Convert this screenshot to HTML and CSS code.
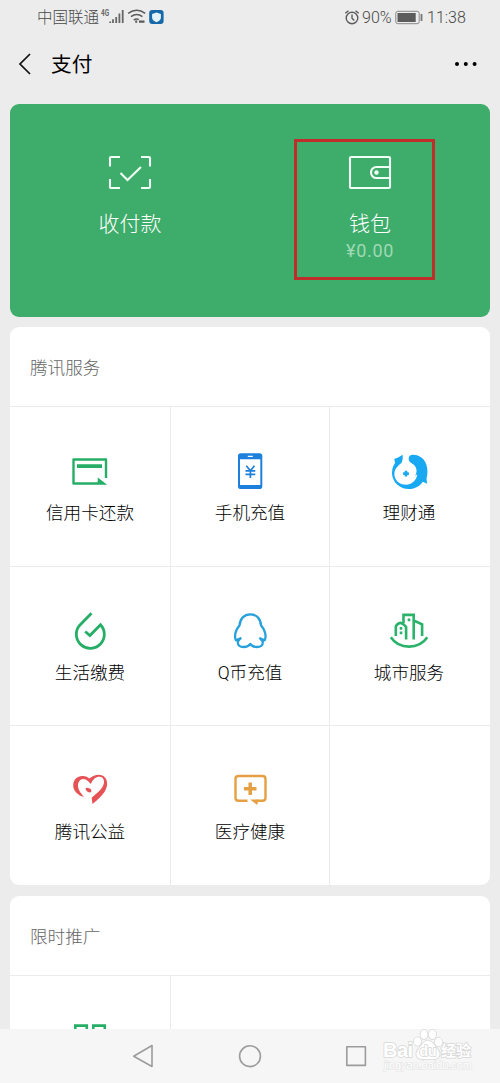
FILE: index.html
```html
<!DOCTYPE html>
<html lang="zh-CN">
<head>
<meta charset="utf-8">
<title>支付</title>
<link rel="stylesheet" href="styles.css">
</head>
<body>
<div class="screen">
  <header class="status">
    <span class="carrier">中国联通</span>
    <svg class="status-icons" width="66" height="20" viewBox="0 0 66 20">
      <text class="net" x="2" y="7.500" textLength="8" lengthAdjust="spacingAndGlyphs">4G</text>
      <g stroke="#666" stroke-width="1.800"><path d="M11.200 15v-1.600M14 15v-3.800M17.200 15V9M20.400 15V5.500M23.700 15V2"/></g>
      <g fill="none" stroke="#5a5a5a" stroke-width="1.500"><path d="M29.200 5.400q8.500-6.200 17 0M32 8.700q5.800-4.300 11.400 0M34.600 12q3-2 5.200-.3"/><path d="M36.200 13.700h2M40 13.700h5.500" stroke-width="2.200"/></g>
      <rect x="50.200" y="2" width="14.400" height="14" rx="3" fill="#1768a8"/>
      <path d="M57.500 4.500l4.400 1.600v3.500q0 3-4.400 4.700-4.400-1.700-4.400-4.700V6.100z" fill="#e4f3fb"/>
    </svg>
    <span class="spacer"></span>
    <svg class="alarm" width="16" height="17" viewBox="0 0 16 17" fill="none" stroke="#5c5c5c" stroke-width="1.400"><circle cx="8" cy="9" r="5.800"/><path d="M8 5.500v3.800l2.300 2.300M1.300 4.300L4.500 1.700M14.700 4.300L11.500 1.700"/></svg>
    <span class="percent">90%</span>
    <svg class="battery" width="28" height="15" viewBox="0 0 28 15"><rect x=".8" y="1.300" width="23.400" height="12.400" rx="2" fill="none" stroke="#888"/><rect x="2.500" y="3" width="18.200" height="9" fill="#5c5c5c"/><rect x="25.600" y="4" width="1.800" height="7" fill="#777"/></svg>
    <span class="clock">11:38</span>
  </header>

  <nav class="titlebar">
    <svg width="14" height="24" viewBox="0 0 14 24" fill="none" stroke="#111" stroke-width="1.700"><path d="M12 2L2 12l10 10"/></svg>
    <h1>支付</h1>
    <svg width="24" height="6" viewBox="0 0 24 6"><circle cx="2" cy="3" r="2"/><circle cx="10.800" cy="3" r="2"/><circle cx="19.600" cy="3" r="2"/></svg>
  </nav>

  <main>
    <section class="hero">
      <div class="action">
        <svg width="44" height="36" viewBox="0 0 44 36" fill="none" stroke="#f0fff5" stroke-width="2.100"><path d="M2 11.500V3q0-1 1-1h9M33 2h8q1 0 1 1v8.500M42 24v8q0 1-1 1h-8M12 33H3q-1 0-1-1v-8M12.500 18l7 7L33 12"/></svg>
        <span class="action-name">收付款</span>
      </div>
      <div class="action">
        <svg width="44" height="36" viewBox="0 0 44 36" fill="none" stroke="#f0fff5" stroke-width="2.100"><rect x="2" y="2" width="40" height="31" rx="1"/><path d="M42 12H28.500a5.500 5.500 0 0 0 0 11H42"/><circle cx="28.500" cy="17.500" r="2.200" fill="#f0fff5" stroke="none"/></svg>
        <span class="action-name">钱包</span>
        <span class="balance">¥0.00</span>
        <i class="highlight"></i>
      </div>
    </section>

    <section class="card">
      <h2>腾讯服务</h2>
      <div class="grid">
        <div class="cell">
          <svg class="icon" viewBox="0 0 40 40"><path d="M36 26V7.500H3.500V31.500H28" fill="none" stroke="#27ae66" stroke-width="2.400" stroke-linejoin="round"/><path d="M7 12.300h25V16H7zM27.700 25.500L37.200 32.700h-9.500z" fill="#27ae66"/></svg>
          <span>信用卡还款</span>
        </div>
        <div class="cell">
          <svg class="icon" viewBox="0 0 40 40"><rect x="8" y="1.300" width="24.300" height="35.700" rx="2.800" fill="#1d80dc"/><path d="M10 7.300h20.300V33H10z" fill="#fff"/><path d="M17.800 4.300h5" stroke="#fff" stroke-width="1.300"/><path d="M16.300 13.700l4.100 5 4.100-5M20.400 18.500V26M15.500 18.900h9.800M15.500 22.400h9.800" fill="none" stroke="#1d80dc" stroke-width="1.700"/></svg>
          <span>手机充值</span>
        </div>
        <div class="cell">
          <svg class="icon" viewBox="0 0 40 40" fill="#18a9f2"><path d="M13.500 2.800Q11 4.800 8 6L5.300 6.800 6 11Q2.800 15.500 3 22C3.800 31 11.500 37.200 20 37c6 0 11-3 13.800-7.300l4.400 2-.7-5.200C41 13 34.500 2.800 24 2.800c-3.700 0-5.200 3-3.800 6.200 1.500 2.500 4.800 2.700 6.200 5.800 1.500 2.700 1.700 5-.2 9l2-1.600c-.5 6.300-5.600 10.500-11.200 10.500C10 32.700 5 27.500 5.400 21.500 5.600 16.600 9.700 13 12.500 11Q14.400 7 13.500 2.800z"/><path d="M15.700 18.700h2.600v1.600h1.600v2.600h-1.600v1.600h-2.600v-1.600h-1.600v-2.600h1.600z"/></svg>
          <span>理财通</span>
        </div>
        <div class="cell">
          <svg class="icon" viewBox="0 0 40 40" fill="none" stroke="#27ae66" stroke-width="2.800"><path d="M21.500 1.300L9.300 13.700A14 14 0 1 0 30.500 12.700L19.900 23.500 15.200 19.500" stroke-linejoin="miter"/></svg>
          <span>生活缴费</span>
        </div>
        <div class="cell">
          <svg class="icon" viewBox="0 0 40 40" fill="none" stroke="#28a0dc" stroke-width="2.300" stroke-linejoin="round"><path d="M20.300 2.300C14 2.300 10 6.800 9.600 13.300 6.300 17.500 3.800 23 5.800 28.200L10.600 26.300 7.800 29.500C7.600 33.500 9.500 35 14 35q4 0 6.300-3 2.300 3 6.300 3c4.500 0 6.400-1.500 6.200-5.500L30 26.300l4.800 1.900c2-5.200-.5-10.700-3.800-14.900C30.600 6.800 26.600 2.300 20.300 2.300z"/></svg>
          <span>Q币充值</span>
        </div>
        <div class="cell">
          <svg class="icon" viewBox="0 0 40 40" fill="none" stroke="#2bb26b" stroke-width="2.600"><path d="M1.800 25.300C10 37.700 30 37.700 38.300 25.300M6.800 24V14.500q1-2.700 4.500-3.800 4 1.200 5.800 4.300V27.500M14.500 11V2.900h10.200V27.500M24.700 8.500l8.400 3.800V24"/><path d="M12 15v2.800M12 19.400v2.800M20 6.400v2.800"/></svg>
          <span>城市服务</span>
        </div>
        <div class="cell">
          <svg class="icon" viewBox="0 0 40 40" fill="#e65356"><path d="M13.800 26C7.600 24.300 3 19.500 3.200 14.300 3.300 8 8 4.300 13.500 5q3.700.2 5.800 2.500C24 3.700 31.500 2 35 6.600c3.200 4 2.700 9.700-.7 14.600Q30.500 26.500 22.500 33l-.8-6.300C28.500 21 34 16.500 34 10.500c0-5-5.200-6.300-9.700-2.800q-2.300 2-3.500 5.200-2.800-3-5-4.300C11 6.600 7.700 10.500 8 15.200c.3 4.300 3 7 5.800 10.800z"/><path d="M15.300 17.500q2.200-1.200 3.500-.2 2.700.4 2.600 3l-1.200 1.300q-3.500-.2-4.900-4.100z"/></svg>
          <span>腾讯公益</span>
        </div>
        <div class="cell">
          <svg class="icon" viewBox="0 0 40 40"><path d="M17.500 29.800H8.500q-3 0-3-3V8q0-3 3-3h24q3 0 3 3v18.800q0 3-3 3h-6" fill="none" stroke="#e5a044" stroke-width="2.400"/><path d="M20 28.600h8.300l-1 5.400z" fill="#e5a044"/><path d="M20.200 11.400V24M13.900 17.700h12.600" stroke="#e5a044" stroke-width="3.500"/></svg>
          <span>医疗健康</span>
        </div>
        <div class="cell"></div>
      </div>
    </section>

    <section class="card">
      <h2>限时推广</h2>
      <div class="grid two">
        <div class="cell">
          <svg class="icon" viewBox="0 0 40 40" fill="none" stroke="#27ae66" stroke-width="2.600"><path d="M5.300 4.600h11.500v12H5.300zM23.300 4.600h11.500v12H23.300zM5.300 22.600h11.500v12H5.300zM23.300 22.600h11.500v12H23.300z"/></svg>
        </div>
        <div class="cell"></div>
      </div>
    </section>
  </main>

  <footer class="softkeys">
    <svg width="500" height="54" viewBox="0 0 500 54" fill="none" stroke="#9c9c9c" stroke-width="1.600" stroke-linejoin="round"><path d="M133.700 27.200L152 16.500V37.500z"/><circle cx="250" cy="27.200" r="10.400"/><rect x="346.800" y="17.800" width="18.600" height="18.600"/></svg>
    <svg class="watermark" width="96" height="48" viewBox="0 0 96 48">
      <g class="mark">
        <text class="brand" x="2" y="28" textLength="30">Bai</text>
        <ellipse cx="36.500" cy="12.500" rx="3.500" ry="4.300"/><ellipse cx="43" cy="5.500" rx="3.600" ry="4.700"/><ellipse cx="51.500" cy="5.500" rx="3.600" ry="4.700"/><ellipse cx="57.500" cy="13" rx="3.500" ry="4.300"/>
        <path d="M47 11.500c4 0 6 4.500 9 7.700 4.500 5 3 10.800-3 10.800H41c-6 0-7.500-5.800-3-10.800 3-3.200 5-7.700 9-7.700z"/>
        <text class="du" x="38.500" y="26.500">du</text>
        <text class="exp" x="60" y="27" textLength="30">经验</text>
        <text class="url" x="3" y="40" textLength="88">jingyan.baidu.com</text>
      </g>
    </svg>
  </footer>
</div>
</body>
</html>
```
FILE: styles.css
```css
* { box-sizing: border-box; }

body {
  margin: 0;
  background: #ececec;
  color: #000;
  font-family: Roboto, "Noto Sans CJK SC", sans-serif;
  font-weight: 300;
}

.screen {
  display: flex;
  flex-direction: column;
  width: 500px;
  height: 1083px;
  overflow: hidden;
}

.status {
  display: flex;
  align-items: center;
  flex: none;
  height: 34px;
  padding: 1px 33px 0 37px;
  color: #484848;
  font-size: 15.500px;
  line-height: 34px;
}

.status-icons { margin-top: 1px; }
.net { font: 700 8.500px Roboto, sans-serif; fill: #666; }
.spacer { flex: 1; }
.alarm { margin-right: 2px; }
.percent { width: 33px; font-size: 16px; }
.clock { width: 40px; margin-left: 4px; font-size: 16px; white-space: nowrap; }

.titlebar {
  display: flex;
  align-items: center;
  flex: none;
  height: 60px;
  padding: 0 21px 0 18px;
}

.titlebar h1 {
  flex: 1;
  margin: 2px 0 0 19px;
  font-size: 20.700px;
  font-weight: 400;
  line-height: 30px;
}

main {
  display: flex;
  flex: 1;
  flex-direction: column;
  gap: 10.500px;
  min-height: 0;
  padding: 10px 10px 0;
  overflow: hidden;
}

.hero {
  display: grid;
  grid-template-columns: 1fr 1fr;
  flex: none;
  height: 212.500px;
  border-radius: 9px;
  background: #3eac6a;
  color: #fff;
}

.action {
  position: relative;
  display: flex;
  flex-direction: column;
  align-items: center;
  padding-top: 51px;
}

.action-name {
  margin-top: 18px;
  font-size: 21px;
  line-height: 30px;
}

.balance {
  margin-top: -1px;
  color: #9fdab6;
  font-size: 18px;
  font-weight: 400;
  letter-spacing: .7px;
  line-height: 26px;
}

.highlight {
  position: absolute;
  top: 35px;
  left: 44px;
  width: 141px;
  height: 141px;
  border: 3px solid #c02e2b;
}

.card {
  flex: none;
  border-radius: 9px;
  background: #fff;
  overflow: hidden;
}

.card h2 {
  height: 79px;
  margin: 0;
  padding-left: 20px;
  color: #666;
  font-size: 17.600px;
  font-weight: 300;
  line-height: 83px;
}

.grid {
  display: grid;
  grid-template-columns: 160px 159px 161px;
  grid-auto-rows: 159.700px;
}

.grid.two { grid-template-columns: 160px 320px; }

.cell {
  display: flex;
  flex-direction: column;
  align-items: center;
  padding-top: 45px;
  border-top: 1px solid #ebebeb;
  box-shadow: inset 1px 0 #ebebeb;
  font-size: 17.600px;
  line-height: 26px;
}

.cell:nth-child(3n + 1) { box-shadow: none; }
.cell:nth-child(3n + 2) { padding-left: 1px; }
.cell:nth-child(3n) { padding-right: 1px; }
.icon { width: 40px; height: 40px; }
.cell span { margin-top: 8px; }

.softkeys {
  position: relative;
  flex: none;
  height: 54px;
  background: #f6f6f6;
}

.watermark {
  position: absolute;
  top: 0;
  left: 381px;
  overflow: visible;
}

.mark {
  fill: #fff;
  stroke: #d6d6d6;
  stroke-width: 1.500px;
  paint-order: stroke;
}

.brand { font: 700 20px "Liberation Sans", sans-serif; }
.du { font: 700 14px "Liberation Sans", sans-serif; }
.exp { font: 700 15px "Noto Sans CJK SC", sans-serif; }
.url { font: 400 11px "Liberation Sans", sans-serif; stroke-width: 1.200px; stroke: #e4e4e4; }
```
